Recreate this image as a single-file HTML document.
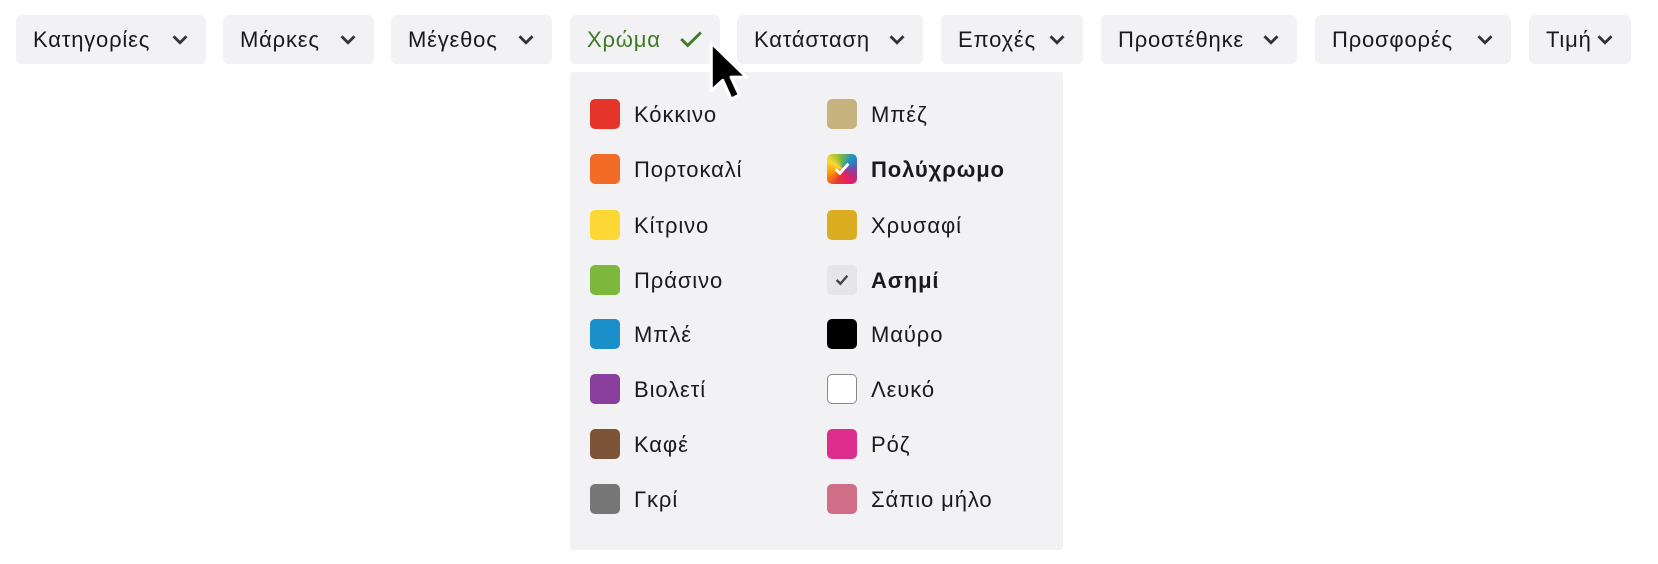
<!DOCTYPE html>
<html><head><meta charset="utf-8"><style>
body{margin:0;width:1658px;height:564px;background:#fff;font-family:"Liberation Sans","DejaVu Sans",sans-serif;color:#1a1a1a;position:relative;overflow:hidden}
.b{position:absolute;top:15px;height:49px;background:#f2f2f4;border-radius:6px;font-size:22px;letter-spacing:0.8px;line-height:49px;padding-left:17px;box-sizing:border-box}
.b svg{position:absolute;top:18px;right:17px}
.p{position:absolute;left:570px;top:72px;width:493px;height:478px;background:#f2f2f4;border-radius:3px}
.i{position:absolute;font-size:22px;letter-spacing:0.9px;line-height:30px;height:30px}
.s{position:absolute;width:30px;height:30px;border-radius:5px;box-sizing:border-box}
</style></head><body>
<div class="b" style="left:16px;width:190px">Κατηγορίες<svg width="18" height="13" viewBox="0 0 16 12"><path d="M2 3l6 6 6-6" fill="none" stroke="#333" stroke-width="2.6"/></svg></div>
<div class="b" style="left:223px;width:151px">Μάρκες<svg width="18" height="13" viewBox="0 0 16 12"><path d="M2 3l6 6 6-6" fill="none" stroke="#333" stroke-width="2.6"/></svg></div>
<div class="b" style="left:391px;width:161px">Μέγεθος<svg width="18" height="13" viewBox="0 0 16 12"><path d="M2 3l6 6 6-6" fill="none" stroke="#333" stroke-width="2.6"/></svg></div>
<div class="b" style="left:570px;width:150px;color:#3f7a22">Χρώμα<svg width="24" height="18" viewBox="0 0 22 16" style="top:15px;right:17px"><path d="M2 8l6 6L20 2" fill="none" stroke="#3f7a22" stroke-width="2.6"/></svg></div>
<div class="b" style="left:737px;width:186px">Κατάσταση<svg width="18" height="13" viewBox="0 0 16 12"><path d="M2 3l6 6 6-6" fill="none" stroke="#333" stroke-width="2.6"/></svg></div>
<div class="b" style="left:941px;width:142px">Εποχές<svg width="18" height="13" viewBox="0 0 16 12"><path d="M2 3l6 6 6-6" fill="none" stroke="#333" stroke-width="2.6"/></svg></div>
<div class="b" style="left:1101px;width:196px">Προστέθηκε<svg width="18" height="13" viewBox="0 0 16 12"><path d="M2 3l6 6 6-6" fill="none" stroke="#333" stroke-width="2.6"/></svg></div>
<div class="b" style="left:1315px;width:196px">Προσφορές<svg width="18" height="13" viewBox="0 0 16 12"><path d="M2 3l6 6 6-6" fill="none" stroke="#333" stroke-width="2.6"/></svg></div>
<div class="b" style="left:1529px;width:102px">Τιμή<svg width="18" height="13" viewBox="0 0 16 12"><path d="M2 3l6 6 6-6" fill="none" stroke="#333" stroke-width="2.6"/></svg></div>
<div class="p"></div>
<div class="s" style="left:590px;top:99px;background:#e5352b"></div><div class="i" style="left:634px;top:100px">Κόκκινο</div>
<div class="s" style="left:590px;top:154px;background:#f26c27"></div><div class="i" style="left:634px;top:155px">Πορτοκαλί</div>
<div class="s" style="left:590px;top:210px;background:#fdd835"></div><div class="i" style="left:634px;top:211px">Κίτρινο</div>
<div class="s" style="left:590px;top:265px;background:#7cb83c"></div><div class="i" style="left:634px;top:266px">Πράσινο</div>
<div class="s" style="left:590px;top:319px;background:#1a8fca"></div><div class="i" style="left:634px;top:320px">Μπλέ</div>
<div class="s" style="left:590px;top:374px;background:#8b3f9c"></div><div class="i" style="left:634px;top:375px">Βιολετί</div>
<div class="s" style="left:590px;top:429px;background:#7d5438"></div><div class="i" style="left:634px;top:430px">Καφέ</div>
<div class="s" style="left:590px;top:484px;background:#777"></div><div class="i" style="left:634px;top:485px">Γκρί</div>
<div class="s" style="left:827px;top:99px;background:#c6b37f"></div><div class="i" style="left:871px;top:100px">Μπέζ</div>
<div class="s" style="left:827px;top:154px;background:conic-gradient(from 200deg,#e53935,#ff9800,#fdd835,#7cb83c,#1a8fca,#8b3f9c,#e91e63,#e53935)"><svg width="30" height="30" viewBox="0 0 28 28"><path d="M8 14l4 4 8-9" fill="none" stroke="#fff" stroke-width="2.6"/></svg></div><div class="i" style="left:871px;top:155px;font-weight:bold">Πολύχρωμο</div>
<div class="s" style="left:827px;top:210px;background:#dbae22"></div><div class="i" style="left:871px;top:211px">Χρυσαφί</div>
<div class="s" style="left:827px;top:265px;background:#e6e6e8"><svg width="30" height="30" viewBox="0 0 28 28"><path d="M9 14l3.5 3.5L19 10" fill="none" stroke="#444" stroke-width="2.2"/></svg></div><div class="i" style="left:871px;top:266px;font-weight:bold">Ασημί</div>
<div class="s" style="left:827px;top:319px;background:#000"></div><div class="i" style="left:871px;top:320px">Μαύρο</div>
<div class="s" style="left:827px;top:374px;background:#fff;border:1px solid #888"></div><div class="i" style="left:871px;top:375px">Λευκό</div>
<div class="s" style="left:827px;top:429px;background:#dd2e8d"></div><div class="i" style="left:871px;top:430px">Ρόζ</div>
<div class="s" style="left:827px;top:484px;background:#cf6e86"></div><div class="i" style="left:871px;top:485px">Σάπιο μήλο</div>
<svg style="position:absolute;left:706px;top:38px" width="46" height="68" viewBox="0 0 44 64"><path d="M5 4v46l11-10 8 18 8-4-8-17h15z" fill="#000" stroke="#fff" stroke-width="3" stroke-linejoin="round"/></svg>
</body></html>
